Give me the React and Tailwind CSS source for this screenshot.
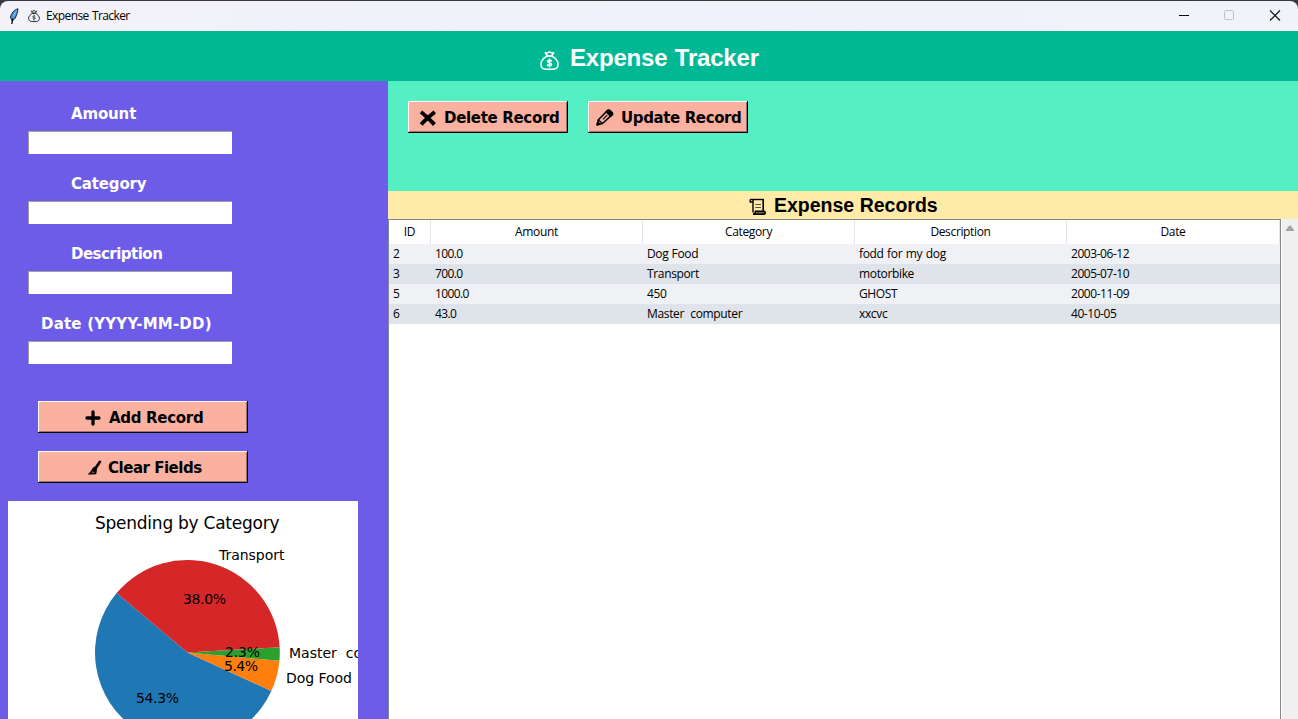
import React from "react";

const UI = "font-['Open_Sans','Noto_Sans',sans-serif]";
const BOLD = "font-['DejaVu_Sans',sans-serif] font-bold";
const ARIAL = "font-['Liberation_Sans',Arial,sans-serif] font-bold";

function FeatherIcon() {
  return (
    <svg width="11" height="17" viewBox="0 0 11 17" fill="none">
      <path d="M9 .8C5.500 1.500 2 5.500 1.500 9.500L3 12.800C6 11.500 8 8 9 .8Z" fill="#4d93dd" stroke="#142436" strokeWidth="1" />
      <path d="M3.800 10.500L2.800 16" stroke="#05101c" strokeWidth="1.300" />
      <path d="M7.500 2.500L4.500 8" stroke="#8ec4fa" strokeWidth="1" />
    </svg>
  );
}

function MoneyBag({ size, stroke, sign }) {
  return (
    <svg width={size} height={size} viewBox="0 0 20 20" fill="none" stroke="currentColor" strokeWidth={stroke} strokeLinejoin="round" strokeLinecap="round">
      <path d="M7.500 5.400C3.500 7.500 1 10.700 1 14C1 17.500 3.500 19.200 6.500 19.200H13.500C16.500 19.200 19 17.500 19 14C19 10.700 16.500 7.500 12.500 5.400Z" />
      <path d="M7.500 5.200L5.600 1.800L7.600 2.200L10 .9L12.400 2.200L14.400 1.800L12.500 5.200Z" />
      <path d="M12 10.600C11.500 9.500 8.100 9.400 8 11C7.900 13 12.200 12.100 12.200 14.200C12.200 15.900 8.300 15.800 7.800 14.600M10 8.500V16.700" strokeWidth={sign} />
    </svg>
  );
}

function ScrollIcon() {
  return (
    <svg width="18" height="18" viewBox="0 0 18 18" fill="none" stroke="#000">
      <path d="M1 1.500H14.700" strokeWidth="1.400" />
      <path d="M14.200 1V13.500" strokeWidth="1.600" />
      <path d="M4 2V14.500" strokeWidth="1.400" />
      <path d="M1.200 1.500V4H3.800" strokeWidth="1.400" />
      <path d="M4 16.200H15C16.800 16.200 16.600 13.300 15 13.300H6.500C6.500 15 5.300 16.200 4 16.200Z" strokeWidth="1.500" fill="#6f674c" />
      <path d="M6.300 6.500H12M6.300 9.500H12" stroke="#5c553d" strokeWidth="1" />
    </svg>
  );
}

function CrossIcon() {
  return (
    <svg width="18" height="16" viewBox="0 0 18 16" fill="none" stroke="#000" strokeWidth="4">
      <path d="M2 2C6 5 11 10 15.500 14.500M15.800 2C12 5 6 10 2.200 14.500" />
    </svg>
  );
}

function PencilIcon() {
  return (
    <svg width="18" height="17" viewBox="0 0 18 17" fill="none" stroke="#000" strokeWidth="1.600" strokeLinejoin="round">
      <path d="M1.200 15.800L2.400 10.800L11.500 1.600C12.600.6 17.400 4 16.200 5.700L6.500 14.500Z" />
      <path d="M10.300 2.700L12 1.200C13.500.5 17.500 4 16.300 5.600L14.600 7.200Z" fill="#000" />
      <path d="M2.500 11L6.200 14.300" strokeWidth="1.200" />
      <path d="M7 10.300L11.300 6.200" strokeWidth="1.100" />
      <path d="M1.200 15.800L1.800 13.300L3.800 15.200Z" fill="#000" />
    </svg>
  );
}

function PlusIcon() {
  return (
    <svg width="16" height="16" viewBox="0 0 16 16" fill="none" stroke="#000" strokeWidth="3.300" strokeLinecap="round">
      <path d="M8 2V14M2 8H14" />
    </svg>
  );
}

function BroomIcon() {
  return (
    <svg width="14" height="15" viewBox="0 0 14 15">
      <path d="M11.300.8L13.200 1.600L8.800 8.500L8 13.900L.3 14.300C2.500 12.500 4 9.500 5.500 7.500L7.200 6.800Z" fill="#000" stroke="#000" strokeWidth=".6" />
      <path d="M3.600 12.900L5 11.700M5.600 13L6.300 11.900" stroke="#fab1a0" strokeWidth=".8" />
    </svg>
  );
}

function TkButton({ icon, label, className }) {
  return (
    <button className={`flex h-8 items-center border-r border-b border-black bg-[#fab1a0] pt-[2px] shadow-[inset_1px_1px_0_#fff,inset_-1px_-1px_0_#a0716a] ${BOLD} text-[15px] leading-5 whitespace-nowrap text-black ${className}`}>
      {icon}
      {label}
    </button>
  );
}

const fields = [
  { label: "Amount", cls: "pl-[71px] tracking-[-0.15px]" },
  { label: "Category", cls: "pl-[71px] tracking-[-0.15px]" },
  { label: "Description", cls: "pl-[71px] tracking-[-0.52px]" },
  { label: "Date (YYYY-MM-DD)", cls: "pl-[41px] tracking-[0.2px]" },
];

const columns = ["Amount", "Category", "Description", "Date"];
const rows = [
  ["2", "100.0", "Dog Food", "fodd for my dog", "2003-06-12"],
  ["3", "700.0", "Transport", "motorbike", "2005-07-10"],
  ["5", "1000.0", "450", "GHOST", "2000-11-09"],
  ["6", "43.0", "Master  computer", "xxcvc", "40-10-05"],
];
const cellTracking = [
  "tracking-[-0.35px]",
  "tracking-[-0.6px]",
  "tracking-[-0.35px] [word-spacing:0.4px]",
  "tracking-[-0.35px] [word-spacing:0.8px]",
  "tracking-[-0.45px]",
];

const CX = 179.4;
const CY = 151.5;
const R = 92.4;
const slices = [
  { from: 140, to: 335.33, color: "#1f77b4" },
  { from: 335.33, to: 354.86, color: "#ff7f0e" },
  { from: 354.86, to: 363.26, color: "#2ca02c" },
  { from: 3.26, to: 140, color: "#d62728" },
];

function slicePath({ from, to }) {
  const pt = (deg) => {
    const a = (deg * Math.PI) / 180;
    return `${CX + R * Math.cos(a)} ${CY - R * Math.sin(a)}`;
  };
  return `M${CX} ${CY}L${pt(from)}A${R} ${R} 0 ${to - from > 180 ? 1 : 0} 0 ${pt(to)}Z`;
}

function PieChart() {
  return (
    <svg width="350" height="218" viewBox="0 0 350 218" className="block bg-white font-['DejaVu_Sans',sans-serif] text-[14px]">
      {slices.map((s) => (
        <path key={s.color} d={slicePath(s)} fill={s.color} />
      ))}
      <text x="87" y="28" className="text-[17px]" textLength="184.500">Spending by Category</text>
      <text x="211" y="59" textLength="65.500">Transport</text>
      <text x="175" y="103" textLength="43">38.0%</text>
      <text x="217" y="156" textLength="35">2.3%</text>
      <text x="216" y="170" textLength="34">5.4%</text>
      <text x="128" y="202" textLength="43">54.3%</text>
      <text x="281" y="157" xmlSpace="preserve">Master  computer</text>
      <text x="278" y="182" textLength="66">Dog Food</text>
    </svg>
  );
}

export default function App() {
  return (
    <div className="flex h-[719px] w-[1298px] flex-col overflow-hidden bg-white text-black">
      <div className="h-[31px] shrink-0 bg-[#3b363d] pt-px">
        <div className="flex h-[30px] items-center rounded-t-lg bg-[#f1f2f9] bg-linear-to-r from-[#f3f2f8] via-[#eff2fa] to-[#f0f3f8] pl-[9px]">
          <FeatherIcon />
          <span className="ml-2 flex text-[#222]">
            <MoneyBag size={12} stroke={1.6} sign={1.1} />
          </span>
          <span className={`${UI} ml-[6px] text-[12px] leading-4 tracking-[-0.6px] [word-spacing:0.8px]`}>Expense Tracker</span>
          <svg width="104" height="12" viewBox="0 0 104 12" fill="none" className="mr-4 ml-auto">
            <path d="M1 5.500H11" stroke="#000" />
            <rect x="46.500" y=".5" width="9" height="9" rx="1" stroke="#bfc1c8" />
            <path d="M92 .5L102 10.500M102 .5L92 10.500" stroke="#111" strokeWidth="1.200" />
          </svg>
        </div>
      </div>

      <header className={`flex h-[50px] shrink-0 items-center bg-[#00b894] pl-[540px] text-white ${ARIAL}`}>
        <span className="mt-[9px] flex">
          <MoneyBag size={19} stroke={1.6} sign={1.6} />
        </span>
        <h1 className="ml-[11px] pt-[3px] text-[24px] leading-7 tracking-[-0.2px] whitespace-nowrap [word-spacing:1px]">Expense Tracker</h1>
      </header>

      <div className="flex min-h-0 flex-1">
        <aside className="flex w-[388px] shrink-0 flex-col bg-[#6c5ce7]">
          <div className="flex flex-col pt-[23px]">
            {fields.map((f) => (
              <label key={f.label} className={`block h-[70px] text-[15px] leading-5 text-white ${BOLD}`}>
                <span className={`block whitespace-nowrap ${f.cls}`}>{f.label}</span>
                <input className="mt-[7px] ml-7 block h-[23px] w-[204px] border-t border-l border-[#a0a0a0] bg-white outline-none" />
              </label>
            ))}
          </div>
          <div className="mt-[17px] ml-[38px] flex flex-col gap-[18px]">
            <TkButton icon={<PlusIcon />} label={<span className="ml-2 tracking-[-0.3px]">Add Record</span>} className="w-[210px] pl-[47px]" />
            <TkButton icon={<BroomIcon />} label={<span className="ml-[6px] tracking-[-0.48px]">Clear Fields</span>} className="w-[210px] pl-[50px]" />
          </div>
          <div className="mt-[18px] ml-2 w-[350px]">
            <PieChart />
          </div>
        </aside>

        <main className="flex min-w-0 flex-1 flex-col">
          <div className="flex h-[110px] shrink-0 gap-5 bg-[#55efc4] pt-5 pl-5">
            <TkButton icon={<CrossIcon />} label={<span className="ml-[7px] tracking-[-0.32px]">Delete Record</span>} className="w-[160px] pl-[11px]" />
            <TkButton icon={<PencilIcon />} label={<span className="ml-[7px] tracking-[-0.38px]">Update Record</span>} className="w-[160px] pl-2" />
          </div>
          <div className={`flex h-7 shrink-0 items-center bg-[#ffeaa7] pl-[361px] ${ARIAL}`}>
            <span className="mt-1 flex">
              <ScrollIcon />
            </span>
            <h2 className="ml-[7px] pb-px text-[19.5px] leading-6 whitespace-nowrap">Expense Records</h2>
          </div>
          <div className="flex min-h-0 flex-1">
            <div className={`flex w-[893px] flex-col border-t border-r border-l border-[#828790] bg-white text-[12px] tracking-[-0.35px] ${UI}`}>
              <div className="grid h-6 grid-cols-[42px_212px_212px_212px_213px] text-center leading-6">
                <span className="border-r border-[#e5e5e5]">ID</span>
                {columns.map((c) => (
                  <span key={c} className="border-r border-[#e5e5e5]">{c}</span>
                ))}
              </div>
              {rows.map((r) => (
                <div key={r[0]} className="grid h-5 grid-cols-[42px_212px_212px_212px_213px] leading-5 whitespace-pre odd:bg-[#dfe3ea] even:bg-[#f0f1f5]">
                  {r.map((cell, i) => (
                    <span key={i} className={`pl-1 ${cellTracking[i]}`}>{cell}</span>
                  ))}
                </div>
              ))}
            </div>
            <div className="flex flex-1 justify-center border-l border-white bg-[#f0f0f0] pt-[6px]">
              <svg width="10" height="7" viewBox="0 0 10 7">
                <path d="M4.200.5H5.800L9 5V6H1V5Z" fill="#a3a3a3" />
              </svg>
            </div>
          </div>
        </main>
      </div>
    </div>
  );
}
